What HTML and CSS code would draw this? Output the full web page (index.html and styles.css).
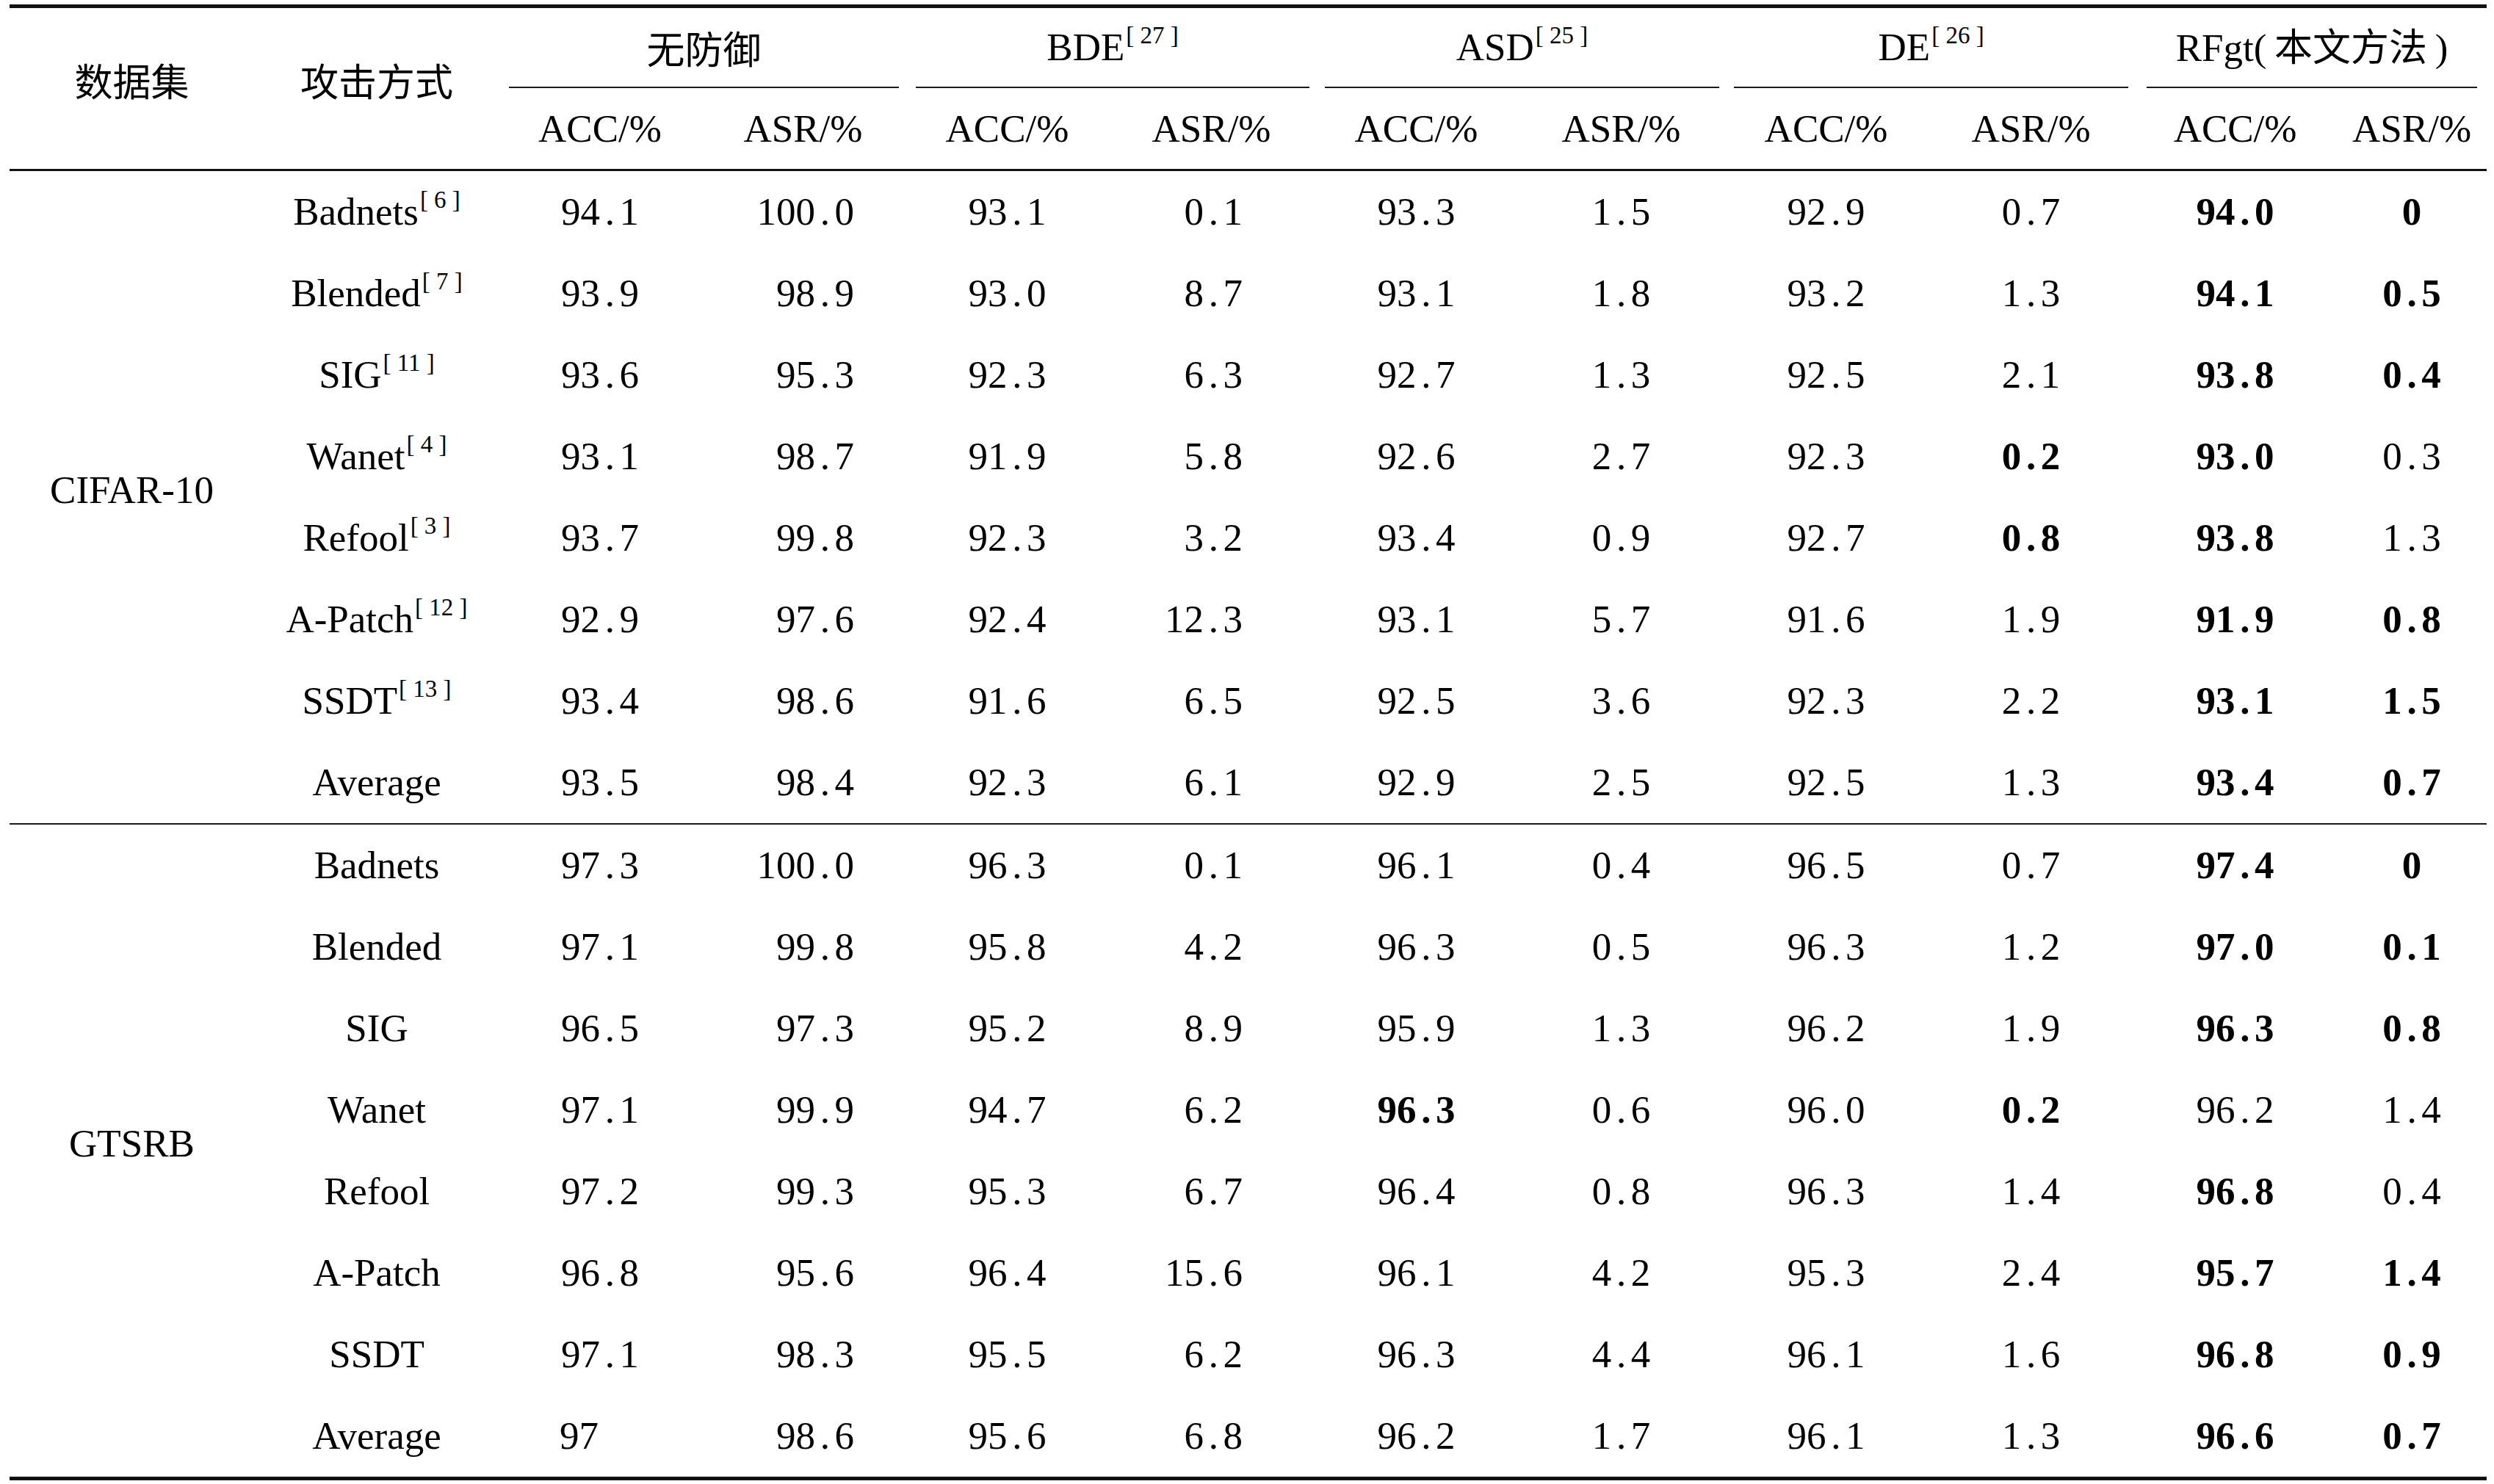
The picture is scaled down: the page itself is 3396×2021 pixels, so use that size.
FILE: index.html
```html
<!DOCTYPE html>
<html lang="zh-CN">
<head>
<meta charset="utf-8">
<title>不同防御方法对比</title>
<link rel="stylesheet" href="styles.css">
</head>
<body>
<table class="tbl">
<colgroup>
<col class="w1"><col class="w2"><col class="w3"><col class="w4"><col class="w5"><col class="w6"><col class="w7"><col class="w8"><col class="w9"><col class="w10"><col class="w11"><col class="w12">
</colgroup>
<thead>
<tr class="h1">
<th rowspan="2" class="cj side">数据集</th>
<th rowspan="2" class="cj side">攻击方式</th>
<th colspan="2" class="grp"><div class="gl g1"><span class="cj">无防御</span></div></th>
<th colspan="2" class="grp"><div class="gl g2"><span class="gt">BDE<sup class="ref">[ 27 ]</sup></span></div></th>
<th colspan="2" class="grp"><div class="gl g3"><span class="gt">ASD<sup class="ref">[ 25 ]</sup></span></div></th>
<th colspan="2" class="grp"><div class="gl g4"><span class="gt">DE<sup class="ref">[ 26 ]</sup></span></div></th>
<th colspan="2" class="grp"><div class="gl g5"><span class="gt">RFgt(&#8201;<span class="cj">本文方法</span>&#8201;)</span></div></th>
</tr>
<tr class="h2">
<th>ACC/%</th><th>ASR/%</th>
<th>ACC/%</th><th>ASR/%</th>
<th>ACC/%</th><th>ASR/%</th>
<th>ACC/%</th><th>ASR/%</th>
<th>ACC/%</th><th>ASR/%</th>
</tr>
</thead>
<tbody class="b1">
<tr><th rowspan="8" class="ds">CIFAR-10</th><th class="atk">Badnets<sup class="ref">[ 6 ]</sup></th><td>94<i>.</i>1</td><td>100<i>.</i>0</td><td>93<i>.</i>1</td><td>0<i>.</i>1</td><td>93<i>.</i>3</td><td>1<i>.</i>5</td><td>92<i>.</i>9</td><td>0<i>.</i>7</td><td><b>94<i>.</i>0</b></td><td><b>0</b></td></tr>
<tr><th class="atk">Blended<sup class="ref">[ 7 ]</sup></th><td>93<i>.</i>9</td><td>98<i>.</i>9</td><td>93<i>.</i>0</td><td>8<i>.</i>7</td><td>93<i>.</i>1</td><td>1<i>.</i>8</td><td>93<i>.</i>2</td><td>1<i>.</i>3</td><td><b>94<i>.</i>1</b></td><td><b>0<i>.</i>5</b></td></tr>
<tr><th class="atk">SIG<sup class="ref">[ 11 ]</sup></th><td>93<i>.</i>6</td><td>95<i>.</i>3</td><td>92<i>.</i>3</td><td>6<i>.</i>3</td><td>92<i>.</i>7</td><td>1<i>.</i>3</td><td>92<i>.</i>5</td><td>2<i>.</i>1</td><td><b>93<i>.</i>8</b></td><td><b>0<i>.</i>4</b></td></tr>
<tr><th class="atk">Wanet<sup class="ref">[ 4 ]</sup></th><td>93<i>.</i>1</td><td>98<i>.</i>7</td><td>91<i>.</i>9</td><td>5<i>.</i>8</td><td>92<i>.</i>6</td><td>2<i>.</i>7</td><td>92<i>.</i>3</td><td><b>0<i>.</i>2</b></td><td><b>93<i>.</i>0</b></td><td>0<i>.</i>3</td></tr>
<tr><th class="atk">Refool<sup class="ref">[ 3 ]</sup></th><td>93<i>.</i>7</td><td>99<i>.</i>8</td><td>92<i>.</i>3</td><td>3<i>.</i>2</td><td>93<i>.</i>4</td><td>0<i>.</i>9</td><td>92<i>.</i>7</td><td><b>0<i>.</i>8</b></td><td><b>93<i>.</i>8</b></td><td>1<i>.</i>3</td></tr>
<tr><th class="atk">A-Patch<sup class="ref">[ 12 ]</sup></th><td>92<i>.</i>9</td><td>97<i>.</i>6</td><td>92<i>.</i>4</td><td>12<i>.</i>3</td><td>93<i>.</i>1</td><td>5<i>.</i>7</td><td>91<i>.</i>6</td><td>1<i>.</i>9</td><td><b>91<i>.</i>9</b></td><td><b>0<i>.</i>8</b></td></tr>
<tr><th class="atk">SSDT<sup class="ref">[ 13 ]</sup></th><td>93<i>.</i>4</td><td>98<i>.</i>6</td><td>91<i>.</i>6</td><td>6<i>.</i>5</td><td>92<i>.</i>5</td><td>3<i>.</i>6</td><td>92<i>.</i>3</td><td>2<i>.</i>2</td><td><b>93<i>.</i>1</b></td><td><b>1<i>.</i>5</b></td></tr>
<tr class="last"><th class="atk">Average</th><td>93<i>.</i>5</td><td>98<i>.</i>4</td><td>92<i>.</i>3</td><td>6<i>.</i>1</td><td>92<i>.</i>9</td><td>2<i>.</i>5</td><td>92<i>.</i>5</td><td>1<i>.</i>3</td><td><b>93<i>.</i>4</b></td><td><b>0<i>.</i>7</b></td></tr>
</tbody>
<tbody class="b2">
<tr><th rowspan="8" class="ds">GTSRB</th><th class="atk">Badnets</th><td>97<i>.</i>3</td><td>100<i>.</i>0</td><td>96<i>.</i>3</td><td>0<i>.</i>1</td><td>96<i>.</i>1</td><td>0<i>.</i>4</td><td>96<i>.</i>5</td><td>0<i>.</i>7</td><td><b>97<i>.</i>4</b></td><td><b>0</b></td></tr>
<tr><th class="atk">Blended</th><td>97<i>.</i>1</td><td>99<i>.</i>8</td><td>95<i>.</i>8</td><td>4<i>.</i>2</td><td>96<i>.</i>3</td><td>0<i>.</i>5</td><td>96<i>.</i>3</td><td>1<i>.</i>2</td><td><b>97<i>.</i>0</b></td><td><b>0<i>.</i>1</b></td></tr>
<tr><th class="atk">SIG</th><td>96<i>.</i>5</td><td>97<i>.</i>3</td><td>95<i>.</i>2</td><td>8<i>.</i>9</td><td>95<i>.</i>9</td><td>1<i>.</i>3</td><td>96<i>.</i>2</td><td>1<i>.</i>9</td><td><b>96<i>.</i>3</b></td><td><b>0<i>.</i>8</b></td></tr>
<tr><th class="atk">Wanet</th><td>97<i>.</i>1</td><td>99<i>.</i>9</td><td>94<i>.</i>7</td><td>6<i>.</i>2</td><td><b>96<i>.</i>3</b></td><td>0<i>.</i>6</td><td>96<i>.</i>0</td><td><b>0<i>.</i>2</b></td><td>96<i>.</i>2</td><td>1<i>.</i>4</td></tr>
<tr><th class="atk">Refool</th><td>97<i>.</i>2</td><td>99<i>.</i>3</td><td>95<i>.</i>3</td><td>6<i>.</i>7</td><td>96<i>.</i>4</td><td>0<i>.</i>8</td><td>96<i>.</i>3</td><td>1<i>.</i>4</td><td><b>96<i>.</i>8</b></td><td>0<i>.</i>4</td></tr>
<tr><th class="atk">A-Patch</th><td>96<i>.</i>8</td><td>95<i>.</i>6</td><td>96<i>.</i>4</td><td>15<i>.</i>6</td><td>96<i>.</i>1</td><td>4<i>.</i>2</td><td>95<i>.</i>3</td><td>2<i>.</i>4</td><td><b>95<i>.</i>7</b></td><td><b>1<i>.</i>4</b></td></tr>
<tr><th class="atk">SSDT</th><td>97<i>.</i>1</td><td>98<i>.</i>3</td><td>95<i>.</i>5</td><td>6<i>.</i>2</td><td>96<i>.</i>3</td><td>4<i>.</i>4</td><td>96<i>.</i>1</td><td>1<i>.</i>6</td><td><b>96<i>.</i>8</b></td><td><b>0<i>.</i>9</b></td></tr>
<tr class="last"><th class="atk">Average</th><td class="lft">97</td><td>98<i>.</i>6</td><td>95<i>.</i>6</td><td>6<i>.</i>8</td><td>96<i>.</i>2</td><td>1<i>.</i>7</td><td>96<i>.</i>1</td><td>1<i>.</i>3</td><td><b>96<i>.</i>6</b></td><td><b>0<i>.</i>7</b></td></tr>
</tbody>
</table>
</body>
</html>
```
FILE: styles.css
```css
html, body {
  margin: 0;
  padding: 0;
  background: #ffffff;
}

body {
  font-family: "Liberation Serif", "Noto Sans CJK SC", serif;
  color: #000000;
}

.tbl {
  margin: 6px 0 0 13px;
  width: 3373px;
  table-layout: fixed;
  border-collapse: separate;
  border-spacing: 0;
  font-size: 53px;
  line-height: 1.1;
}

.w1 { width: 333px; }
.w2 { width: 334px; }
.w3 { width: 274px; }
.w4 { width: 279px; }
.w5 { width: 277px; }
.w6 { width: 279px; }
.w7 { width: 279px; }
.w8 { width: 279px; }
.w9 { width: 279px; }
.w10 { width: 279px; }
.w11 { width: 277px; }
.w12 { width: 204px; }

th, td {
  font-weight: normal;
  padding: 0;
  text-align: center;
  vertical-align: middle;
  white-space: nowrap;
}

.cj {
  font-family: "Noto Sans CJK SC", "Liberation Serif", sans-serif;
  font-size: 52px;
  line-height: 1;
}

/* header */
.h1 > th {
  border-top: 5px solid #111111;
}

.side {
  border-bottom: 3px solid #111111;
  padding-bottom: 24px;
}

.grp {
  vertical-align: bottom;
}

.gl {
  height: 107px;
  display: flex;
  align-items: center;
  justify-content: center;
  border-bottom: 2px solid #1a1a1a;
  margin: 0 8px 0 14px;
}

.gt {
  display: block;
  line-height: 1.1;
}

.g1 { margin: 0 9px 0 13px; }
.g2 { margin: 0 6px 0 14px; }
.g3 { margin: 0 6px 0 15px; }
.g4 { margin: 0 7px 0 14px; }
.g5 { margin: 0 13px 0 18px; }

.h2 > th {
  height: 110px;
  border-bottom: 3px solid #111111;
}

.ref {
  font-size: 33px;
  vertical-align: 23px;
  line-height: 0;
  margin-left: 2px;
}

/* body */
tbody th, tbody td {
  height: 111px;
}

tbody td:nth-of-type(2) {
  text-align: right;
  padding-right: 70px;
}

tbody td:nth-of-type(4) {
  text-align: right;
  padding-right: 97px;
}

td.lft {
  text-align: left;
  padding-left: 82px;
}

td i, td b i {
  font-style: normal;
  display: inline-block;
  width: 0.5em;
  text-align: center;
}

td b {
  font-weight: bold;
}

.ds {
  padding-bottom: 20px;
}

.b1 .ds,
.b1 .last > th,
.b1 .last > td {
  border-bottom: 2px solid #1a1a1a;
}

.b2 .ds,
.b2 .last > th,
.b2 .last > td {
  border-bottom: 5px solid #111111;
}
```
